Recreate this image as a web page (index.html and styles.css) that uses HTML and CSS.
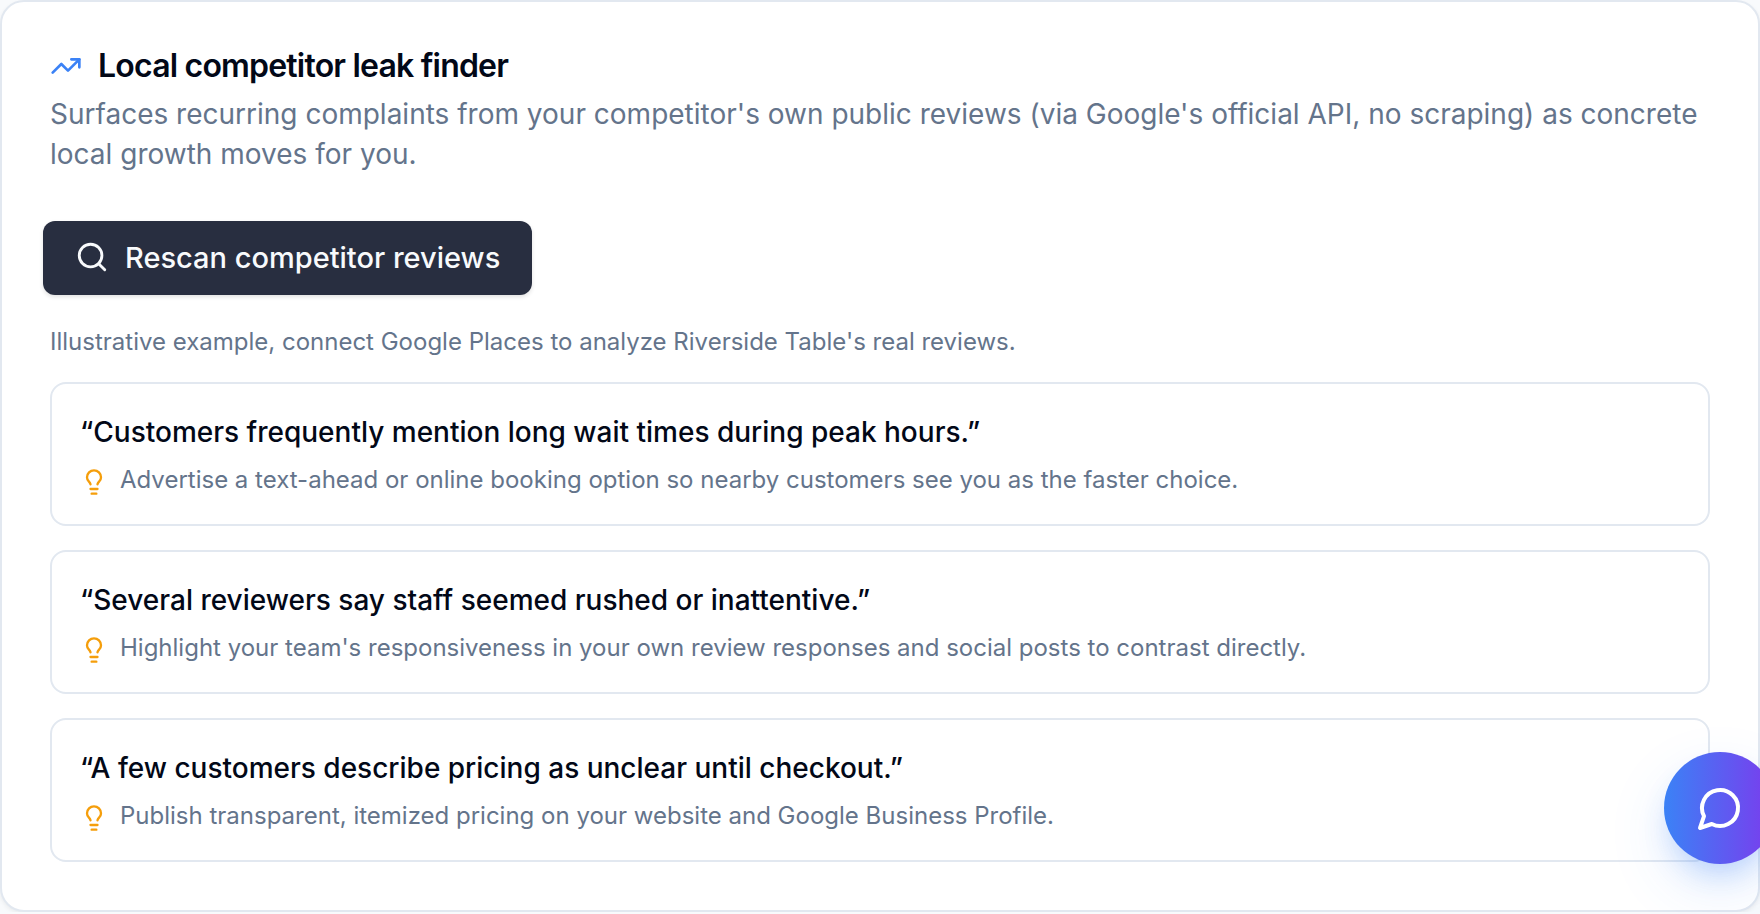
FILE: index.html
```html
<!doctype html>
<html lang="en">

<head>
    <meta charset="utf-8">
    <title>Local competitor leak finder</title>
    <link rel="stylesheet" href="styles.css">
</head>
<body>
<main class="card">
    <header class="card-header">
        <h1 class="title">
            <svg class="icon trend" viewBox="0 0 24 24"><path d="M22 7 13.5 15.5 8.5 10.5 2 17"/><path d="M16 7h6v6"/></svg>
            Local competitor leak finder
        </h1>
        <p class="description">Surfaces recurring complaints from your competitor's own public reviews (via Google's official API, no scraping) as concrete local growth moves for you.</p>
    </header>

    <button type="button" class="rescan">
        <svg class="icon" viewBox="0 0 24 24"><circle cx="11" cy="11" r="8"/><path d="m21 21-4.3-4.3"/></svg>
        Rescan competitor reviews
    </button>

    <p class="note">Illustrative example, connect Google Places to analyze Riverside Table's real reviews.</p>

    <ul class="leaks">
        <li class="leak">
            <p class="quote">“Customers frequently mention long wait times during peak hours.”</p>
            <p class="tip">
                <svg class="icon bulb" viewBox="0 0 24 24"><path d="M15 14c.2-1 .7-1.7 1.5-2.5 1-.9 1.5-2.2 1.5-3.5A6 6 0 0 0 6 8c0 1 .2 2.2 1.5 3.5.7.7 1.3 1.5 1.5 2.5"/><path d="M9 18h6"/><path d="M10 22h4"/></svg>
                Advertise a text-ahead or online booking option so nearby customers see you as the faster choice.
            </p>
        </li>
        <li class="leak">
            <p class="quote">“Several reviewers say staff seemed rushed or inattentive.”</p>
            <p class="tip">
                <svg class="icon bulb" viewBox="0 0 24 24"><path d="M15 14c.2-1 .7-1.7 1.5-2.5 1-.9 1.5-2.2 1.5-3.5A6 6 0 0 0 6 8c0 1 .2 2.2 1.5 3.5.7.7 1.3 1.5 1.5 2.5"/><path d="M9 18h6"/><path d="M10 22h4"/></svg>
                Highlight your team's responsiveness in your own review responses and social posts to contrast directly.
            </p>
        </li>
        <li class="leak">
            <p class="quote">“A few customers describe pricing as unclear until checkout.”</p>
            <p class="tip">
                <svg class="icon bulb" viewBox="0 0 24 24"><path d="M15 14c.2-1 .7-1.7 1.5-2.5 1-.9 1.5-2.2 1.5-3.5A6 6 0 0 0 6 8c0 1 .2 2.2 1.5 3.5.7.7 1.3 1.5 1.5 2.5"/><path d="M9 18h6"/><path d="M10 22h4"/></svg>
                Publish transparent, itemized pricing on your website and Google Business Profile.
            </p>
        </li>
    </ul>
</main>

<button type="button" class="chat" aria-label="Open chat">
    <svg class="icon" viewBox="0 0 24 24"><path d="M7.9 20A9 9 0 1 0 4 16.1L2 22Z"/></svg>
</button>
</body>

</html>
```

FILE: styles.css
```css
* {
    box-sizing: border-box;
    margin: 0;
    padding: 0;
}
body {
    background-color: #f8fafc;
    color: #020817;
    font-family: Inter, "Liberation Sans", sans-serif;
    font-size: 28px;
    line-height: 40px;
    overflow-x: hidden;
}
.icon {
    flex-shrink: 0;
    width: 32px;
    height: 32px;
    fill: none;
    stroke: currentColor;
    stroke-width: 2;
    stroke-linecap: round;
    stroke-linejoin: round;
}

.card {
    padding: 48px;
    background-color: white;
    border: 2px solid #e2e8f0;
    border-radius: 24px;
    box-shadow: 0 2px 4px rgba(0, 0, 0, 0.06);
}
.card-header {
    margin-bottom: 48px;
}
.title {
    display: flex;
    align-items: center;
    gap: 16px;
    margin-bottom: 12px;
    font-size: 32px;
    font-weight: 600;
    line-height: 32px;
    letter-spacing: -0.025em;
}
.trend {
    color: #3b82f6;
}
.description {
    color: #64748b;
}

/* grows a little past the text column */
.rescan {
    display: flex;
    align-items: center;
    gap: 16px;
    height: 74px;
    margin: -1px -7px;
    padding: 0 32px 2px;
    border: 0;
    border-radius: 12px;
    background-color: #282e40;
    color: #f8fafc;
    box-shadow: 0 2px 4px rgba(0, 0, 0, 0.12);
    font-family: inherit;
    font-size: 29px;
    font-weight: 500;
    cursor: pointer;
}
.rescan .icon {
    width: 34px;
    height: 34px;
}

.note {
    margin: 32px 0 24px;
    color: #64748b;
    font-size: 24px;
    line-height: 32px;
}
.leaks {
    display: flex;
    flex-direction: column;
    gap: 24px;
    list-style: none;
}
.leak {
    padding: 28px;
    border: 2px solid #e2e8f0;
    border-radius: 16px;
}
.quote {
    font-weight: 500;
}
.tip {
    display: flex;
    gap: 12px;
    margin-top: 12px;
    color: #64748b;
    font-size: 24px;
    line-height: 32px;
}
.bulb {
    width: 28px;
    height: 28px;
    margin-top: 4px;
    color: #f59e0b;
}

.chat {
    position: fixed;
    right: -16px;
    bottom: 50px;
    display: flex;
    align-items: center;
    justify-content: center;
    width: 112px;
    height: 112px;
    border: 0;
    border-radius: 50%;
    background-image: linear-gradient(to right, #3b82f6, #7c3aed);
    color: white;
    box-shadow: 0 16px 28px -8px rgba(59, 130, 246, 0.3), 0 24px 60px rgba(59, 130, 246, 0.14);
    cursor: pointer;
}
.chat .icon {
    width: 48px;
    height: 48px;
}
```
